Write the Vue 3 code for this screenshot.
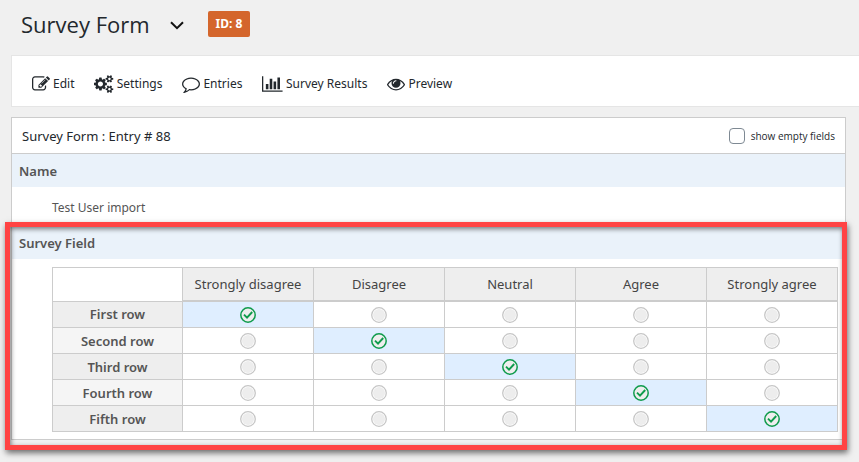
<script setup>
import { ref } from 'vue'

const smallCog =
  'v140q0 16-149 31-12 27-30 52 51 113 51 138 0 4-4 7-122 71-124 71-8 0-46-47t-52-68q-20 2-30 2t-30-2q-14 21-52 68t-46 47q-2 0-124-71-4-3-4-7 0-25 51-138-18-25-30-52-149-15-149-31v-140q0-16 149-31 13-29 30-52-51-113-51-138 0-4 4-7 4-2 35-20t59-34 30-16q8 0 46 46.5t52 67.5q20-2 30-2t30 2q51-71 92-112l6-2q4 0 124 70 4 3 4 7 0 25-51 138 17 23 30 52 149 15 149 31z'

const links = [
  {
    label: 'Edit',
    box: '0 0 1792 1792',
    icon: 'M888 1184l116-116-152-152-116 116v56h96v96h56zm440-720q-16-16-33 1l-350 350q-17 17-1 33t33-1l350-350q17-17 1-33zm80 594v190q0 119-84.5 203.5t-203.5 84.5h-832q-119 0-203.5-84.5t-84.5-203.5v-832q0-119 84.5-203.5t203.5-84.5h832q63 0 117 25 15 7 18 23 3 17-9 29l-49 49q-14 14-32 8-23-6-45-6h-832q-66 0-113 47t-47 113v832q0 66 47 113t113 47h832q66 0 113-47t47-113v-126q0-13 9-22l64-64q15-15 35-7t20 29zm-96-738l288 288-672 672h-288v-288zm444 132l-92 92-288-288 92-92q28-28 68-28t68 28l152 152q28 28 28 68t-28 68z'
  },
  {
    label: 'Settings',
    box: '0 0 1920 1792',
    icon:
      'M896 896q0-106-75-181t-181-75-181 75-75 181 75 181 181 75 181-75 75-181zm768 512q0-52-38-90t-90-38-90 38-38 90q0 53 37.5 90.5t90.5 37.5 90.5-37.5 37.5-90.5zm0-1024q0-52-38-90t-90-38-90 38-38 90q0 53 37.5 90.5t90.5 37.5 90.5-37.5 37.5-90.5zm-384 421v185q0 10-7 19.5t-16 10.5l-155 24q-11 35-32 76 34 48 90 115 7 11 7 20 0 12-7 19-23 30-82.5 89.5t-78.5 59.5q-11 0-21-7l-115-90q-37 19-77 31-11 108-23 155-7 24-30 24h-186q-11 0-20-7.5t-10-17.5l-23-153q-34-10-75-31l-118 89q-7 7-20 7-11 0-21-8-144-133-144-160 0-9 7-19 10-14 41-53t47-61q-23-44-35-82l-152-24q-10-1-17-9.5t-7-19.5v-185q0-10 7-19.5t16-10.5l155-24q11-35 32-76-34-48-90-115-7-11-7-20 0-12 7-20 22-30 82-89t79-59q11 0 21 7l115 90q34-18 77-32 11-108 23-154 7-24 30-24h186q11 0 20 7.5t10 17.5l23 153q34 10 75 31l118-89q8-7 20-7 11 0 21 8 144 133 144 160 0 8-7 19-12 16-42 54t-45 60q23 48 34 82l152 23q10 2 17 10.5t7 19.5z' +
      'M1920 1338' + smallCog + 'M1920 314' + smallCog
  },
  {
    label: 'Entries',
    box: '0 0 1792 1792',
    icon: 'M896 384q-204 0-381.5 69.5t-282 187.5-104.5 255q0 112 71.5 213.5t201.5 175.5l87 50-27 96q-24 91-70 172 152-63 275-171l43-38 57 6q69 8 130 8 204 0 381.5-69.5t282-187.5 104.5-255-104.5-255-282-187.5-381.5-69.5zm896 512q0 174-120 321.5t-326 233-450 85.5q-70 0-145-8-198 175-460 242-49 14-114 22h-5q-15 0-27-10.5t-16-27.5v-1q-3-4-.5-12t2-10 4.5-9.5l6-9 7-8.5 8-9q7-8 31-34.5t34.5-38 31-39.5 32.5-51 27-59 26-76q-157-89-247.5-220t-90.5-281q0-174 120-321.5t326-233 450-85.5 450 85.5 326 233 120 321.5z'
  },
  {
    label: 'Survey Results',
    box: '0 0 2048 1792',
    icon: 'M640 896v512h-256v-512h256zm384-512v1024h-256v-1024h256zm1024 1152v128h-2048v-1536h128v1408h1920zm-640-896v768h-256v-768h256zm384-384v1152h-256v-1152h256z'
  },
  {
    label: 'Preview',
    box: '0 0 1792 1792',
    icon: 'M1664 960q-152-236-381-353 61 104 61 225 0 185-131.5 316.5t-316.5 131.5-316.5-131.5-131.5-316.5q0-121 61-225-229 117-381 353 133 205 333.5 326.5t434.5 121.5 434.5-121.5 333.5-326.5zm-720-384q0-20-14-34t-34-14q-125 0-214.5 89.5t-89.5 214.5q0 20 14 34t34 14 34-14 14-34q0-86 61-147t147-61q20 0 34-14t14-34zm848 384q0 34-20 69-140 230-376.5 368.5t-499.5 138.5-499.5-139-376.5-368q-20-35-20-69t20-69q140-229 376.5-368t499.5-139 499.5 139 376.5 368q20 35 20 69z'
  }
]

const choices = ['Strongly disagree', 'Disagree', 'Neutral', 'Agree', 'Strongly agree']
const rows = [
  { label: 'First row', answer: 0 },
  { label: 'Second row', answer: 1 },
  { label: 'Third row', answer: 2 },
  { label: 'Fourth row', answer: 3 },
  { label: 'Fifth row', answer: 4 }
]
const showEmpty = ref(false)
</script>

<template>
  <div class="page">
    <header class="title-bar">
      <h1>Survey Form</h1>
      <button class="switcher" type="button" aria-label="Switch form">
        <svg viewBox="0 0 14 9" width="14" height="9"><path d="M1 1.2l6 6 6-6" fill="none" stroke="#111" stroke-width="2" /></svg>
      </button>
      <span class="form-id">ID: 8</span>
    </header>

    <nav class="toolbar">
      <a v-for="link in links" :key="link.label" href="#">
        <svg :viewBox="link.box" height="18"><path :d="link.icon" fill="currentColor" /></svg>
        <span>{{ link.label }}</span>
      </a>
    </nav>

    <main class="entry">
      <div class="entry-head">
        <h2>Survey Form : Entry # 88</h2>
        <label class="toggle">
          <input v-model="showEmpty" type="checkbox" />
          <span>show empty fields</span>
        </label>
      </div>

      <section>
        <h3>Name</h3>
        <p class="value">Test User import</p>
      </section>

      <section class="highlighted">
        <h3>Survey Field</h3>
        <div class="likert-wrap">
          <table>
            <thead>
              <tr>
                <td class="corner"></td>
                <th v-for="choice in choices" :key="choice" scope="col">{{ choice }}</th>
              </tr>
            </thead>
            <tbody>
              <tr v-for="row in rows" :key="row.label">
                <th scope="row">{{ row.label }}</th>
                <td v-for="(choice, i) in choices" :key="choice" :class="{ chosen: row.answer === i }">
                  <svg v-if="row.answer === i" viewBox="0 0 16 16" width="16" height="16">
                    <circle cx="8" cy="8" r="7.2" fill="#eee" stroke="#0f9b4c" stroke-width="1.5" />
                    <path d="M4 7.6l3 3 5.2-5.6" fill="none" stroke="#0f9b4c" stroke-width="1.9" />
                  </svg>
                  <svg v-else viewBox="0 0 16 16" width="16" height="16">
                    <circle cx="8" cy="8" r="7.3" fill="#fff" stroke="#c6c6c6" stroke-width="1.3" />
                    <circle cx="8" cy="8" r="6" fill="#ededed" />
                  </svg>
                </td>
              </tr>
            </tbody>
          </table>
        </div>
        <div class="callout"></div>
      </section>
    </main>
  </div>
</template>

<style>
body {
  background: #f0f0f0;
}
</style>

<style scoped>
.page {
  padding: 0 0 22px 11px;
  font-family: 'Noto Sans', 'Open Sans', sans-serif;
  font-size: 13px;
  line-height: 18px;
  color: #23282d;
}
h1,
h2,
h3,
p {
  margin: 0;
  font-weight: 400;
}
.title-bar {
  display: flex;
  align-items: center;
  height: 47px;
  padding: 0 10px 8px;
}
h1 {
  font-family: 'Open Sans', 'Noto Sans', sans-serif;
  font-size: 22px;
  line-height: 30px;
}
.switcher {
  display: flex;
  padding: 4px 0 0;
  margin: 0 24px 0 20px;
  border: 0;
  background: none;
}
.form-id {
  padding: 4px 8px;
  border-radius: 2px;
  background: #d4662c;
  color: #fff;
  font-size: 12px;
  font-weight: 700;
}
.toolbar {
  display: flex;
  align-items: center;
  gap: 20px;
  padding: 19px 20px 13px;
  border: 1px solid #e5e5e5;
  border-right: 0;
  background: #fff;
  font-size: 12px;
}
.toolbar a {
  display: flex;
  align-items: center;
  gap: 3px;
  color: #23282d;
  text-decoration: none;
  white-space: nowrap;
}
.entry {
  margin: 10px 13px 0 0;
  border: 1px solid #ccc;
  background: #fff;
}
.entry-head {
  display: flex;
  align-items: center;
  justify-content: space-between;
  height: 35px;
  padding: 0 10px;
  border-bottom: 1px solid #ccc;
}
h2 {
  font-size: 13px;
}
.toggle {
  display: flex;
  align-items: center;
  gap: 6px;
  font-family: 'Open Sans', 'Noto Sans', sans-serif;
  font-size: 10px;
}
.toggle input {
  appearance: none;
  width: 16px;
  height: 16px;
  margin: 0;
  border: 1px solid #7e8993;
  border-radius: 4px;
  background: #fff;
}
h3 {
  padding: 8px 7px 7px;
  background: #eaf2fa;
  color: #555;
  font-size: 13px;
  font-weight: 600;
}
.value {
  padding: 12px 40px 9px;
  color: #555;
  font-size: 12px;
}
.highlighted {
  position: relative;
}
.likert-wrap {
  padding: 8px 7px 7px 40px;
}
table {
  width: 100%;
  table-layout: fixed;
  border-collapse: collapse;
}
th,
td {
  height: 25px;
  padding: 0;
  border: 1px solid #ccc;
  text-align: center;
  vertical-align: middle;
}
thead th {
  height: 32px;
  border-bottom: 2px solid #ccc;
  background: #eee;
  color: #444;
  font-weight: 400;
}
.corner {
  width: 129px;
  background: #fff;
}
tbody th {
  background: #eee;
  color: #555;
  font-weight: 600;
}
tbody tr:nth-child(even) th {
  background: #f5f5f5;
}
.chosen {
  background: #dfeeff;
}
td svg {
  display: block;
  margin: 0 auto;
}
.callout {
  position: absolute;
  inset: -4px -2px -11px -7px;
  border: 5px solid #ff4343;
  box-shadow: 1px 3px 6px rgba(0, 0, 0, 0.55), inset 1px 2px 5px rgba(0, 0, 0, 0.5);
  pointer-events: none;
}
</style>
